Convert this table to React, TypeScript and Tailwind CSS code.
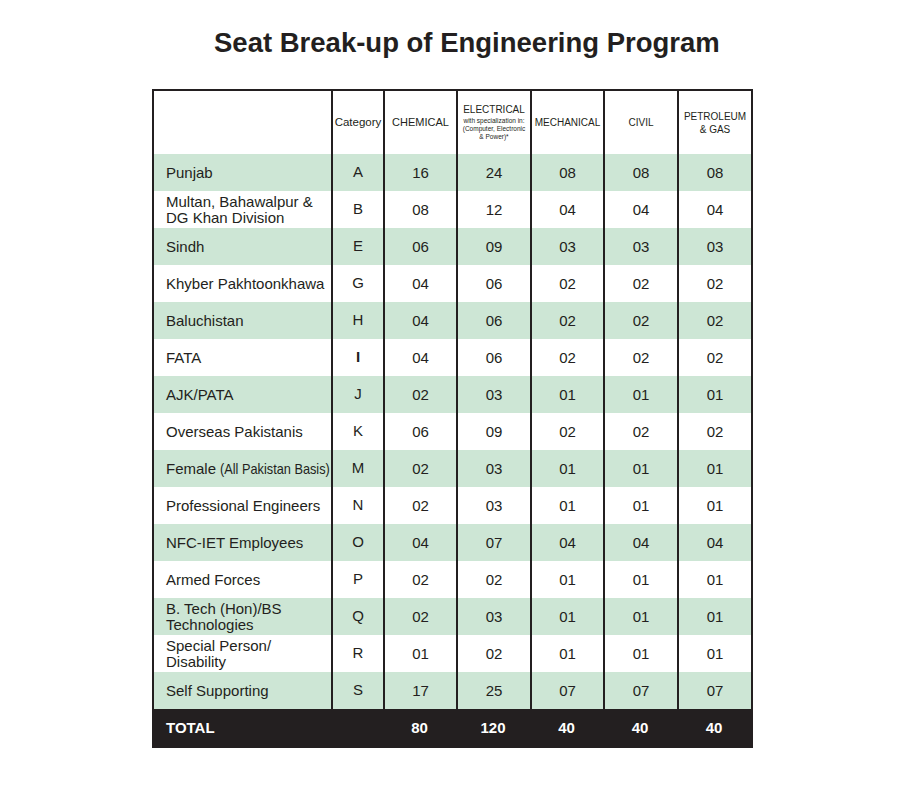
const rows = [
  { label: ["Punjab"], cat: "A", vals: ["16", "24", "08", "08", "08"] },
  { label: ["Multan, Bahawalpur &", "DG Khan Division"], cat: "B", vals: ["08", "12", "04", "04", "04"] },
  { label: ["Sindh"], cat: "E", vals: ["06", "09", "03", "03", "03"] },
  { label: ["Khyber Pakhtoonkhawa"], cat: "G", vals: ["04", "06", "02", "02", "02"] },
  { label: ["Baluchistan"], cat: "H", vals: ["04", "06", "02", "02", "02"] },
  { label: ["FATA"], cat: "I", vals: ["04", "06", "02", "02", "02"] },
  { label: ["AJK/PATA"], cat: "J", vals: ["02", "03", "01", "01", "01"] },
  { label: ["Overseas Pakistanis"], cat: "K", vals: ["06", "09", "02", "02", "02"] },
  { label: ["Female"], note: "(All Pakistan Basis)", cat: "M", vals: ["02", "03", "01", "01", "01"] },
  { label: ["Professional Engineers"], cat: "N", vals: ["02", "03", "01", "01", "01"] },
  { label: ["NFC-IET Employees"], cat: "O", vals: ["04", "07", "04", "04", "04"] },
  { label: ["Armed Forces"], cat: "P", vals: ["02", "02", "01", "01", "01"] },
  { label: ["B. Tech (Hon)/BS", "Technologies"], cat: "Q", vals: ["02", "03", "01", "01", "01"] },
  { label: ["Special Person/", "Disability"], cat: "R", vals: ["01", "02", "01", "01", "01"] },
  { label: ["Self Supporting"], cat: "S", vals: ["17", "25", "07", "07", "07"] },
];

const totals = ["80", "120", "40", "40", "40"];

const grid = "grid grid-cols-[177px_52px_73px_74px_73px_74px_74px]";

export default function App() {
  return (
    <div className="w-[905px] h-[805px] bg-white text-[#231f20] font-['Liberation_Sans',Arial,sans-serif]">
      <div className="flex flex-col items-start pl-[152px]">
        <h1 className="ml-[62px] pt-[29px] text-[27.5px] leading-[27px] font-bold whitespace-nowrap">Seat Break-up of Engineering Program</h1>

        <div className="mt-[33px] w-[601px] border-x-2 border-t-2 border-[#231f20]">
          {/* header */}
          <div className={`${grid} h-[63px] text-center`}>
            <div></div>
            <div className="border-l-2 border-[#231f20] flex items-center justify-center text-[11.5px]">Category</div>
            <div className="border-l-2 border-[#231f20] flex items-center justify-center text-[11px]">CHEMICAL</div>
            <div className="border-l-2 border-[#231f20] flex flex-col items-center justify-center">
              <div className="text-[10px] leading-[12px]">ELECTRICAL</div>
              <div className="text-[6.5px] leading-[8px] mt-[1px]">with specialization in:</div>
              <div className="text-[6.5px] leading-[8px]">(Computer, Electronic</div>
              <div className="text-[6.5px] leading-[8px]">&amp; Power)*</div>
            </div>
            <div className="border-l-2 border-[#231f20] flex items-center justify-center text-[10px]">MECHANICAL</div>
            <div className="border-l-2 border-[#231f20] flex items-center justify-center text-[10px]">CIVIL</div>
            <div className="border-l-2 border-[#231f20] flex flex-col items-center justify-center text-[10px] leading-[13px]">
              <div>PETROLEUM</div>
              <div>&amp; GAS</div>
            </div>
          </div>

          {/* body */}
          {rows.map((row, i) => (
            <div key={i} className={`${grid} h-[37px] text-[15px] ${i % 2 === 0 ? "bg-[#cde6d5]" : "bg-white"}`}>
              <div className="flex flex-col justify-center pl-[12px] leading-[16px]">
                {row.label.length > 1 ? (
                  row.label.map((l, j) => <div key={j}>{l}</div>)
                ) : (
                  <div className="whitespace-nowrap">
                    {row.label[0]}
                    {row.note && (
                      <>
                        {" "}
                        <span className="inline-block origin-left scale-x-85 mr-[-19px]">{row.note}</span>
                      </>
                    )}
                  </div>
                )}
              </div>
              <div className={`border-l-2 border-[#231f20] flex items-center justify-center ${row.cat === "I" ? "font-bold" : ""}`}>{row.cat}</div>
              {row.vals.map((v, j) => (
                <div key={j} className="border-l-2 border-[#231f20] flex items-center justify-center pt-[1px]">{v}</div>
              ))}
            </div>
          ))}
        </div>

        {/* total */}
        <div className={`${grid} w-[601px] h-[39px] bg-[#231f20] text-white font-bold text-[15px] px-[2px]`}>
          <div className="flex items-center pl-[12px]">TOTAL</div>
          <div></div>
          {totals.map((t, j) => (
            <div key={j} className="flex items-center justify-center">{t}</div>
          ))}
        </div>
      </div>
    </div>
  );
}
